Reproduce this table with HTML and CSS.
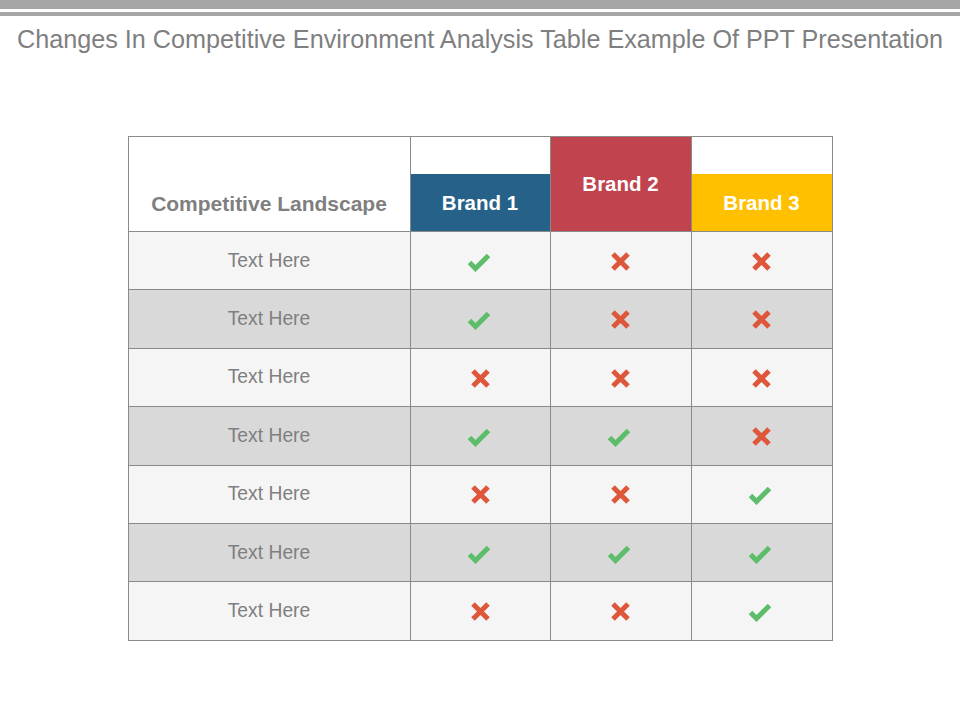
FILE: index.html
```html
<!DOCTYPE html>
<html>
<head>
<meta charset="utf-8">
<link rel="stylesheet" href="styles.css">
</head>
<body>
<div class="bar bar-top"></div>
<div class="bar bar-thin"></div>
<h1 class="title">Changes In Competitive Environment Analysis Table Example Of PPT Presentation</h1>
<svg width="0" height="0" class="defs">
  <defs>
    <symbol id="chk" viewBox="0 0 24 20"><polyline points="2.5,10.5 8.5,16.5 21.5,3.5" fill="none" stroke="#5dbd6a" stroke-width="5"/></symbol>
    <symbol id="crs" viewBox="0 0 21 21"><path d="M3 3 L18 18 M18 3 L3 18" fill="none" stroke="#df573a" stroke-width="5"/></symbol>
  </defs>
</svg>
<table class="grid">
  <colgroup><col class="c0"><col class="c1"><col class="c2"><col class="c3"></colgroup>
  <tr class="h-top">
    <th rowspan="2" class="landscape">Competitive Landscape</th>
    <th class="blank"></th>
    <th rowspan="2" class="brand b2">Brand 2</th>
    <th class="blank"></th>
  </tr>
  <tr class="h-bot">
    <th class="brand b1">Brand 1</th>
    <th class="brand b3">Brand 3</th>
  </tr>
  <tr class="light"><td>Text Here</td><td><svg class="ic"><use href="#chk"/></svg></td><td><svg class="ix"><use href="#crs"/></svg></td><td><svg class="ix"><use href="#crs"/></svg></td></tr>
  <tr class="dark"><td>Text Here</td><td><svg class="ic"><use href="#chk"/></svg></td><td><svg class="ix"><use href="#crs"/></svg></td><td><svg class="ix"><use href="#crs"/></svg></td></tr>
  <tr class="light"><td>Text Here</td><td><svg class="ix"><use href="#crs"/></svg></td><td><svg class="ix"><use href="#crs"/></svg></td><td><svg class="ix"><use href="#crs"/></svg></td></tr>
  <tr class="dark"><td>Text Here</td><td><svg class="ic"><use href="#chk"/></svg></td><td><svg class="ic"><use href="#chk"/></svg></td><td><svg class="ix"><use href="#crs"/></svg></td></tr>
  <tr class="light"><td>Text Here</td><td><svg class="ix"><use href="#crs"/></svg></td><td><svg class="ix"><use href="#crs"/></svg></td><td><svg class="ic"><use href="#chk"/></svg></td></tr>
  <tr class="dark"><td>Text Here</td><td><svg class="ic"><use href="#chk"/></svg></td><td><svg class="ic"><use href="#chk"/></svg></td><td><svg class="ic"><use href="#chk"/></svg></td></tr>
  <tr class="light"><td>Text Here</td><td><svg class="ix"><use href="#crs"/></svg></td><td><svg class="ix"><use href="#crs"/></svg></td><td><svg class="ic"><use href="#chk"/></svg></td></tr>
</table>
</body>
</html>
```

FILE: styles.css
```css
html, body {
  margin: 0;
  padding: 0;
  background: #ffffff;
  font-family: "Liberation Sans", Arial, sans-serif;
}
.defs { position: absolute; }
.bar { background: #a6a6a6; }
.bar-top { height: 9px; }
.bar-thin { height: 4px; margin-top: 3px; }
.title {
  margin: 8px 0 0 0;
  height: 30px;
  line-height: 30px;
  font-size: 25.2px;
  font-weight: normal;
  color: #7f7f7f;
  text-align: center;
  white-space: nowrap;
}
.grid {
  margin: 82px auto 0 auto;
  border-collapse: collapse;
  table-layout: fixed;
  width: 705px;
}
.c0 { width: 282px; }
.c1 { width: 140px; }
.c2 { width: 141px; }
.c3 { width: 141px; }
.grid th, .grid td {
  border: 1px solid #8a8a8a;
  padding: 0;
  text-align: center;
  vertical-align: middle;
}
.h-top { height: 37px; }
.h-bot { height: 58px; }
.landscape {
  background: #ffffff;
  color: #7f7f7f;
  font-size: 21px;
  font-weight: bold;
  vertical-align: bottom !important;
  padding-bottom: 15px !important;
}
.blank { background: #ffffff; border-bottom: none !important; }
.brand {
  color: #ffffff;
  font-size: 20.5px;
  font-weight: bold;
}
.b1 { background: #266189; border-top: none !important; }
.b2 { background: #c0434e; padding-bottom: 0 !important; padding-top: 0 !important; }
.b3 { background: #ffc000; border-top: none !important; }
.b1, .b3 { padding-top: 1px !important; }
.grid td {
  height: 57.4px;
  color: #7f7f7f;
  font-size: 19.3px;
}
.light td { background: #f5f5f5; }
.dark td { background: #d9d9d9; }
.ic { width: 24px; height: 20px; vertical-align: middle; margin-right: 3px; }
.ix { width: 21px; height: 21px; vertical-align: middle; }
```
